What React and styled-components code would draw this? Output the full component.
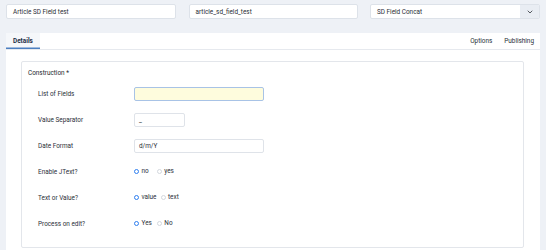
import styled, { createGlobalStyle } from 'styled-components';
import { ChevronDown } from 'lucide-react';

const GlobalStyle = createGlobalStyle`
  html, body {
    margin: 0;
    padding: 0;
    background: #eef1f6;
    font-family: Roboto, "Liberation Sans", Arial, sans-serif;
    color: #22272e;
  }
`;

const Page = styled.div`
  padding: 4px 6px 0 6px;
  width: 534px;
`;

const TopRow = styled.div`
  display: grid;
  grid-template-columns: 170px 169px 170px;
  column-gap: 12.5px;
`;

const TopInput = styled.div`
  height: 15px;
  box-sizing: border-box;
  background: #fff;
  border: 1px solid #dde2e9;
  border-radius: 2px;
  font-size: 6.4px;
  display: flex;
  align-items: center;
  padding-left: 6px;
  color: #2a2f36;
`;

const Select = styled(TopInput)`
  justify-content: space-between;
  padding-right: 0;
  overflow: hidden;
`;

const Chevron = styled.span`
  width: 19px;
  height: 100%;
  background: #e9edf3;
  display: flex;
  align-items: center;
  justify-content: center;
  color: #1f242b;
`;

const Panel = styled.div`
  margin-top: 14px;
  background: #fff;
  height: 217px;
`;

const TabBar = styled.div`
  display: flex;
  align-items: stretch;
  height: 16px;
  border-bottom: 1px solid #e6e9ee;
`;

const Tab = styled.div`
  display: flex;
  align-items: center;
  padding: 0 ${(p) => p.$pad || 6}px;
  font-size: 6.4px;
  font-weight: ${(p) => (p.$active ? 700 : 400)};
  color: ${(p) => (p.$active ? '#1c2d45' : '#2a2f36')};
  background: ${(p) => (p.$active ? '#f5f7fa' : 'transparent')};
  box-shadow: ${(p) => (p.$active ? 'inset 0 -1.5px 0 #4c7fc0' : 'none')};
`;

const Spacer = styled.div`
  flex: 1;
`;

const Body = styled.div`
  padding: 11px 16px 0 15px;
`;

const Fieldset = styled.div`
  border: 1px solid #e3e6eb;
  border-radius: 2px;
  height: 187px;
  box-sizing: border-box;
  padding: 7px 6px 0 6px;
`;

const Legend = styled.div`
  font-size: 6.4px;
  line-height: 8px;
  color: #22272e;
  margin-bottom: 4px;
`;

const Row = styled.div`
  display: flex;
  align-items: center;
  height: 26px;
  padding-left: 10px;
`;

const Label = styled.div`
  width: 96px;
  font-size: 6.4px;
  color: #2b3039;
`;

const Input = styled.div`
  width: ${(p) => p.$w}px;
  height: 14px;
  box-sizing: border-box;
  border: 1px solid ${(p) => (p.$focus ? '#a8c3e6' : '#dfe3e9')};
  background: ${(p) => (p.$focus ? '#fefcdd' : '#fff')};
  border-radius: 2px;
  font-size: 6.4px;
  display: flex;
  align-items: center;
  padding-left: 4px;
  color: #2a2f36;
`;

const Radios = styled.div`
  display: flex;
  align-items: center;
  margin-top: -2px;
`;

const Option = styled.span`
  display: flex;
  align-items: center;
  font-size: 6.4px;
  color: #2b3039;
  margin-right: ${(p) => p.$gap || 4}px;
`;

const Dot = styled.span`
  width: 5px;
  height: 5px;
  border-radius: 50%;
  box-sizing: border-box;
  margin-right: 2.5px;
  background: #fff;
  border: ${(p) => (p.$on ? '1.7px solid #2f7ff0' : '0.8px solid #d3d8de')};
`;

const radioRows = [
  { label: 'Enable JText?', options: ['no', 'yes'], gaps: [8, 0] },
  { label: 'Text or Value?', options: ['value', 'text'], gaps: [4, 0] },
  { label: 'Process on edit?', options: ['Yes', 'No'], gaps: [5, 0] },
];

export default function App() {
  return (
    <>
      <GlobalStyle />
      <Page>
        <TopRow>
          <TopInput>Article SD Field test</TopInput>
          <TopInput>article_sd_field_test</TopInput>
          <Select>
            SD Field Concat
            <Chevron>
              <ChevronDown size={8} strokeWidth={2.2} />
            </Chevron>
          </Select>
        </TopRow>
        <Panel>
          <TabBar>
            <Tab $active $pad={7}>Details</Tab>
            <Spacer />
            <Tab>Options</Tab>
            <Tab $pad={6}>Publishing</Tab>
          </TabBar>
          <Body>
            <Fieldset>
              <Legend>Construction *</Legend>
              <Row>
                <Label>List of Fields</Label>
                <Input $w={130} $focus />
              </Row>
              <Row>
                <Label>Value Separator</Label>
                <Input $w={51}>_</Input>
              </Row>
              <Row>
                <Label>Date Format</Label>
                <Input $w={130}>d/m/Y</Input>
              </Row>
              {radioRows.map((r) => (
                <Row key={r.label}>
                  <Label>{r.label}</Label>
                  <Radios>
                    {r.options.map((o, i) => (
                      <Option key={o} $gap={r.gaps[i]}>
                        <Dot $on={i === 0} />
                        {o}
                      </Option>
                    ))}
                  </Radios>
                </Row>
              ))}
            </Fieldset>
          </Body>
        </Panel>
      </Page>
    </>
  );
}
